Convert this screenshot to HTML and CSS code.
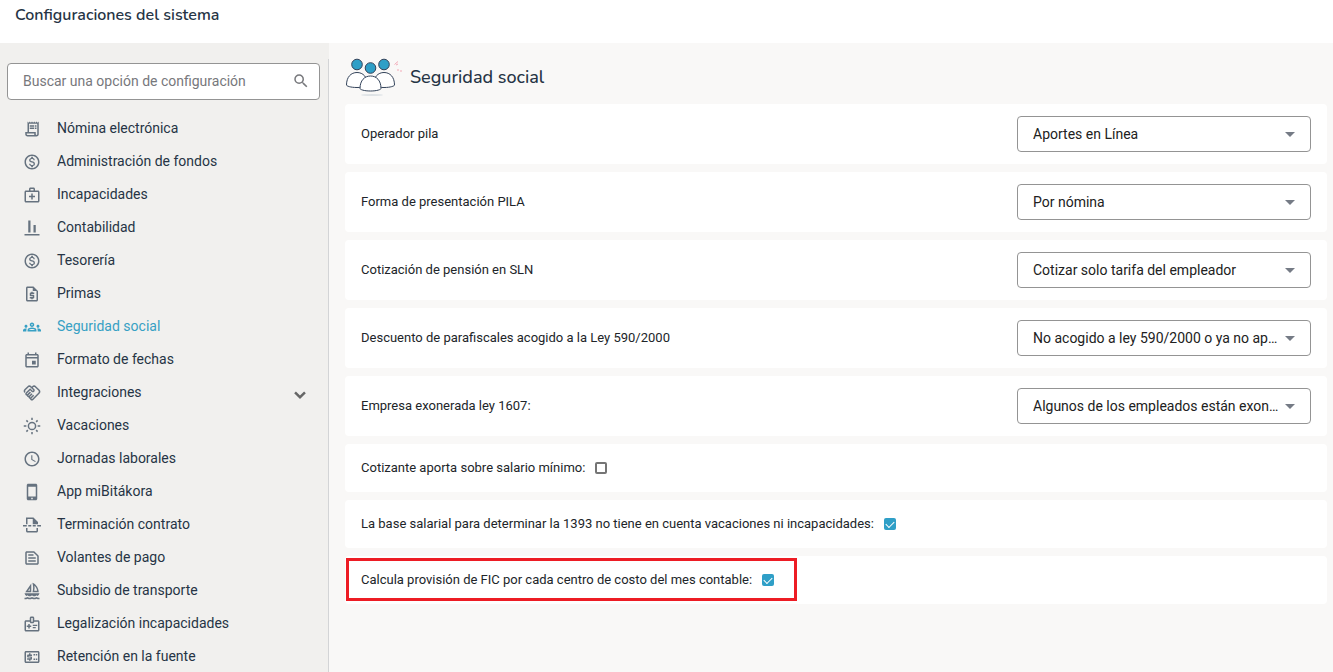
FILE: index.html
```html
<!DOCTYPE html>
<html lang="es">

<head>
    <meta charset="UTF-8" />
    <meta name="viewport" content="width=device-width, initial-scale=1.0" />
    <title>Configuraciones del sistema</title>
    <link rel="stylesheet" href="styles.css">
</head>

<body>
    <header class="topbar">
        <h1>Configuraciones del sistema</h1>
    </header>

    <div class="layout">
        <aside class="sidebar">
            <div class="sidebar-inner">
                <div class="search">
                    <input type="text" placeholder="Buscar una opción de configuración" aria-label="Buscar una opción de configuración">
                    <svg class="search-icon" viewBox="0 0 24 24"><path d="M15.5 14h-.79l-.28-.27A6.47 6.47 0 0 0 16 9.5 6.5 6.5 0 1 0 9.5 16c1.61 0 3.09-.59 4.23-1.57l.27.28v.79l5 4.99L20.49 19l-4.99-5zm-6 0C7.01 14 5 11.99 5 9.5S7.01 5 9.5 5 14 7.01 14 9.5 11.99 14 9.5 14z"/></svg>
                </div>

                <nav class="menu">
                    <a href="#">
                        <svg viewBox="0 0 24 24"><path d="M19.5 3.5L18 2l-1.5 1.5L15 2l-1.5 1.5L12 2l-1.5 1.5L9 2 7.5 3.5 6 2v14H3v3c0 1.66 1.34 3 3 3h12c1.66 0 3-1.34 3-3V2l-1.5 1.5zM15 20H6c-.55 0-1-.45-1-1v-1h10v2zm4-1c0 .55-.45 1-1 1s-1-.45-1-1v-3H8V5h11v14zM9 7h6v2H9zM16 7h2v2h-2zM9 10h6v2H9zM16 10h2v2h-2z"/></svg>
                        <span>Nómina electrónica</span>
                    </a>
                    <a href="#">
                        <svg viewBox="0 0 24 24"><path d="M12 2C6.48 2 2 6.48 2 12s4.48 10 10 10 10-4.48 10-10S17.52 2 12 2zm0 18c-4.41 0-8-3.59-8-8s3.59-8 8-8 8 3.59 8 8-3.59 8-8 8zm.31-8.86c-1.77-.45-2.34-.94-2.34-1.67 0-.84.79-1.43 2.1-1.43 1.38 0 1.9.66 1.94 1.64h1.71c-.05-1.34-.87-2.57-2.49-2.97V5H10.9v1.69c-1.51.32-2.72 1.3-2.72 2.81 0 1.79 1.49 2.69 3.66 3.21 1.95.46 2.34 1.15 2.34 1.87 0 .53-.39 1.39-2.1 1.39-1.6 0-2.23-.72-2.32-1.64H8.04c.1 1.7 1.36 2.66 2.86 2.97V19h2.34v-1.67c1.52-.29 2.72-1.16 2.73-2.77-.01-2.2-1.9-2.96-3.66-3.42z"/></svg>
                        <span>Administración de fondos</span>
                    </a>
                    <a href="#">
                        <svg viewBox="0 0 24 24"><path d="M20 6h-4V4c0-1.1-.9-2-2-2h-4c-1.1 0-2 .9-2 2v2H4c-1.1 0-2 .9-2 2v12c0 1.1.9 2 2 2h16c1.1 0 2-.9 2-2V8c0-1.1-.9-2-2-2zM10 4h4v2h-4V4zm10 16H4V8h16v12zM13 10h-2v3H8v2h3v3h2v-3h3v-2h-3z"/></svg>
                        <span>Incapacidades</span>
                    </a>
                    <a href="#">
                        <svg viewBox="0 0 24 24"><path d="M2 20h20v2H2zM7 2h3v16H7zM14 8h3v10h-3z"/></svg>
                        <span>Contabilidad</span>
                    </a>
                    <a href="#">
                        <svg viewBox="0 0 24 24"><path d="M12 2C6.48 2 2 6.48 2 12s4.48 10 10 10 10-4.48 10-10S17.52 2 12 2zm0 18c-4.41 0-8-3.59-8-8s3.59-8 8-8 8 3.59 8 8-3.59 8-8 8zm.31-8.86c-1.77-.45-2.34-.94-2.34-1.67 0-.84.79-1.43 2.1-1.43 1.38 0 1.9.66 1.94 1.64h1.71c-.05-1.34-.87-2.57-2.49-2.97V5H10.9v1.69c-1.51.32-2.72 1.3-2.72 2.81 0 1.79 1.49 2.69 3.66 3.21 1.95.46 2.34 1.15 2.34 1.87 0 .53-.39 1.39-2.1 1.39-1.6 0-2.23-.72-2.32-1.64H8.04c.1 1.7 1.36 2.66 2.86 2.97V19h2.34v-1.67c1.52-.29 2.72-1.16 2.73-2.77-.01-2.2-1.9-2.96-3.66-3.42z"/></svg>
                        <span>Tesorería</span>
                    </a>
                    <a href="#">
                        <svg viewBox="0 0 24 24"><path d="M14 2H6c-1.1 0-2 .9-2 2v16c0 1.1.89 2 2 2h12c1.1 0 2-.9 2-2V8l-6-6zM6 20V4h7v4h5v12H6zM11 19h2v-1h1c.55 0 1-.45 1-1v-3c0-.55-.45-1-1-1h-3v-1h4v-2h-2V9h-2v1h-1c-.55 0-1 .45-1 1v3c0 .55.45 1 1 1h3v1H9v2h2v1z"/></svg>
                        <span>Primas</span>
                    </a>
                    <a href="#" class="active">
                        <svg viewBox="0 0 24 24"><path d="M4 13c1.1 0 2-.9 2-2s-.9-2-2-2-2 .9-2 2 .9 2 2 2zm1.13 1.1c-.37-.06-.74-.1-1.13-.1-.99 0-1.93.21-2.78.58C.48 14.9 0 15.62 0 16.43V18h4.5v-1.61c0-.83.23-1.61.63-2.29zM20 13c1.1 0 2-.9 2-2s-.9-2-2-2-2 .9-2 2 .9 2 2 2zm4 3.43c0-.81-.48-1.53-1.22-1.85-.85-.37-1.79-.58-2.78-.58-.39 0-.76.04-1.13.1.4.68.63 1.46.63 2.29V18H24v-1.57zM16.24 13.65c-1.17-.52-2.61-.9-4.24-.9s-3.07.39-4.24.9C6.68 14.13 6 15.21 6 16.39V18h12v-1.61c0-1.18-.68-2.26-1.76-2.74zM8.07 16c.09-.23.13-.39.91-.69.97-.38 1.99-.56 3.02-.56s2.05.18 3.02.56c.77.3.81.46.91.69H8.07zM12 8c.55 0 1 .45 1 1s-.45 1-1 1-1-.45-1-1 .45-1 1-1m0-2c-1.66 0-3 1.34-3 3s1.34 3 3 3 3-1.34 3-3-1.34-3-3-3z"/></svg>
                        <span>Seguridad social</span>
                    </a>
                    <a href="#">
                        <svg viewBox="0 0 24 24"><path d="M19 4h-1V2h-2v2H8V2H6v2H5c-1.11 0-1.99.9-1.99 2L3 20c0 1.1.89 2 2 2h14c1.1 0 2-.9 2-2V6c0-1.1-.9-2-2-2zm0 16H5V10h14v10zm0-12H5V6h14v2zM12 13h5v5h-5z"/></svg>
                        <span>Formato de fechas</span>
                    </a>
                    <a href="#">
                        <svg viewBox="0 0 24 24"><path d="M12.22 19.85c-.18.18-.5.21-.71 0a.504.504 0 0 1 0-.71l3.39-3.39-1.41-1.41-3.39 3.39c-.19.2-.51.19-.71 0a.504.504 0 0 1 0-.71l3.39-3.39-1.41-1.41-3.39 3.39c-.18.18-.5.21-.71 0a.513.513 0 0 1 0-.71l3.39-3.39-1.42-1.41-3.39 3.39c-.18.18-.5.21-.71 0a.513.513 0 0 1 0-.71L9.52 8.4l1.87 1.86c.95.95 2.59.94 3.54 0 .98-.98.98-2.56 0-3.54l-1.86-1.86.28-.28c.78-.78 2.05-.78 2.83 0l4.24 4.24c.78.78.78 2.05 0 2.83l-8.2 8.2zm9.61-6.78a4.008 4.008 0 0 0 0-5.66l-4.24-4.24a4.008 4.008 0 0 0-5.66 0l-.28.28-.28-.28a4.008 4.008 0 0 0-5.66 0L2.17 6.71a3.992 3.992 0 0 0-.4 5.19l1.45-1.45a2 2 0 0 1 .37-2.33l3.54-3.54c.78-.78 2.05-.78 2.83 0l3.56 3.56c.18.18.21.5 0 .71-.21.21-.53.18-.71 0L9.52 5.57l-5.8 5.79c-.98.97-.98 2.56 0 3.54.39.39.89.63 1.42.7a2.458 2.458 0 0 0 2.12 2.12 2.458 2.458 0 0 0 2.12 2.12c.07.54.31 1.03.7 1.42.47.47 1.1.73 1.77.73.67 0 1.3-.26 1.77-.73l8.21-8.19z"/></svg>
                        <span>Integraciones</span>
                        <svg class="chevron" viewBox="0 0 24 24"><path d="M5 6l7 7 7-7 3 3-10 10L2 9z"/></svg>
                    </a>
                    <a href="#">
                        <svg class="stroked" viewBox="0 0 24 24"><circle cx="12" cy="12" r="4.8"/><path d="M12 1v3M12 20v3M1 12h3.5M19.5 12H23M4.5 4.5l2 2M17.5 17.5l2 2M19.5 4.5l-2 2M6.5 17.5l-2 2"/></svg>
                        <span>Vacaciones</span>
                    </a>
                    <a href="#">
                        <svg viewBox="0 0 24 24"><path d="M12 2C6.48 2 2 6.48 2 12s4.48 10 10 10 10-4.48 10-10S17.52 2 12 2zm0 18c-4.42 0-8-3.58-8-8s3.58-8 8-8 8 3.58 8 8-3.58 8-8 8zM12.5 7H11v6l5.25 3.15.75-1.23-4.5-2.67z"/></svg>
                        <span>Jornadas laborales</span>
                    </a>
                    <a href="#">
                        <svg viewBox="0 0 24 24"><path fill-rule="evenodd" d="M7 1h10c1.1 0 2 .9 2 2v18c0 1.1-.9 2-2 2H7c-1.1 0-2-.9-2-2V3c0-1.1.9-2 2-2zm0 4v13h10V5zm4 14.5v2h2v-2z"/></svg>
                        <span>App miBitákora</span>
                    </a>
                    <a href="#">
                        <svg viewBox="0 0 24 24"><path d="M4 2h10l6 6v3h-7V4H6v7H4zM0 12h5v2H0zM7 12h4v2H7zM13 12h4v2h-4zM19 12h5v2h-5zM4 16h2v4h12v-4h2v4c0 1.1-.9 2-2 2H6c-1.1 0-2-.9-2-2z"/></svg>
                        <span>Terminación contrato</span>
                    </a>
                    <a href="#">
                        <svg viewBox="0 0 24 24"><path d="M14.17 5L19 9.83V19H5V5h9.17m0-2H5c-1.1 0-2 .9-2 2v14c0 1.1.9 2 2 2h14c1.1 0 2-.9 2-2V9.83c0-.53-.21-1.04-.59-1.41l-4.83-4.83c-.37-.38-.88-.59-1.41-.59zM7 15h10v2H7v-2zm0-4h10v2H7v-2zm0-4h7v2H7V7z"/></svg>
                        <span>Volantes de pago</span>
                    </a>
                    <a href="#">
                        <svg viewBox="0 0 24 24"><path fill-rule="evenodd" d="M11 13.5V2L3 13.5zm-2-2H6.83L9 8.38zM21 13.5C21 6.5 14.5 1 12.5 1c0 0 1 3 1 6.5s-1 6-1 6zm-6-2c.6-2.3.6-4.5.3-6.5 1.9 1.9 3.1 4.2 3.5 6.5zM22 15H2c.31 1.53 1.16 2.84 2.33 3.73.65-.27 1.22-.72 1.67-1.23.73.84 1.8 1.5 3 1.5s2.27-.66 3-1.5c.73.84 1.8 1.5 3 1.5s2.26-.66 3-1.5c.45.51 1.02.96 1.67 1.23C20.84 17.84 21.69 16.53 22 15zM22 23v-2h-1c-1.04 0-2.08-.35-3-1-1.83 1.3-4.17 1.3-6 0-1.83 1.3-4.17 1.3-6 0-.91.65-1.96 1-3 1H2v2h1c1.03 0 2.05-.25 3-.75 1.89 1 4.11 1 6 0 1.89 1 4.11 1 6 0 .95.5 1.97.75 3 .75z"/></svg>
                        <span>Subsidio de transporte</span>
                    </a>
                    <a href="#">
                        <svg viewBox="0 0 24 24"><path d="M20 7h-5V4c0-1.1-.9-2-2-2h-2c-1.1 0-2 .9-2 2v3H4c-1.1 0-2 .9-2 2v11c0 1.1.9 2 2 2h16c1.1 0 2-.9 2-2V9c0-1.1-.9-2-2-2zm-9-3h2v5h-2V4zm9 16H4V9h5c0 1.1.9 2 2 2h2c1.1 0 2-.9 2-2h5v11zM11 16H9v2H7v-2H5v-2h2v-2h2v2h2v2zm2-1.5V13h6v1.5h-6zm0 3V16h4v1.5h-4z"/></svg>
                        <span>Legalización incapacidades</span>
                    </a>
                    <a href="#">
                        <svg viewBox="0 0 24 24"><path fill-rule="evenodd" d="M4 4h16c1.1 0 2 .9 2 2v12c0 1.1-.9 2-2 2H4c-1.1 0-2-.9-2-2V6c0-1.1.9-2 2-2zm0 2v12h16V6z"/><path d="M8 7h2v1.5h2v2H7.5v.8H11c.6 0 1 .4 1 1v2.200c0 .6-.4 1-1 1h-1V17H8v-1.500H5.500v-2h4.500v-.7H6.500c-.6 0-1-.4-1-1V9.500c0-.6.4-1 1-1H8zM14 8h2v2h-2zM14 14h2v2h-2zM17 8h2v2h-2zM17 14h2v2h-2z"/></svg>
                        <span>Retención en la fuente</span>
                    </a>
                </nav>
            </div>
        </aside>

        <main class="content">
            <div class="section-title">
                <svg class="people" viewBox="0 0 58 40">
                    <ellipse class="shadow" cx="27" cy="38" rx="11" ry="1"/>
                    <g class="bodies">
                        <path d="M1.5 28c0-8 4.500-12.500 10.500-12.500S22.500 20 22.500 28c0 1-4 2.500-10.500 2.500S1.500 29 1.500 28z"/>
                        <path d="M28.500 28c0-8 4.500-12.500 10.500-12.500S49.500 20 49.500 28c0 1-4 2.500-10.500 2.500S28.500 29 28.500 28z"/>
                        <path d="M15 31.500c0-8 4.500-12.500 10.500-12.500S36 23.500 36 31.500c0 1-4 2.500-10.500 2.500S15 32.500 15 31.500z"/>
                    </g>
                    <g class="heads">
                        <circle cx="12" cy="7.500" r="5.300"/>
                        <circle cx="39" cy="7.500" r="5.300"/>
                        <circle cx="25.500" cy="11" r="5.300"/>
                    </g>
                    <path class="sparks" d="M49.500 7.500l3.500-3M51 8l2-1M52 13h2M55 14h2"/>
                </svg>
                <h2>Seguridad social</h2>
            </div>

            <form class="settings">
                <div class="card">
                    <label for="operador">Operador pila</label>
                    <div class="select">
                        <select id="operador">
                            <option>Aportes en Línea</option>
                        </select>
                    </div>
                </div>
                <div class="card">
                    <label for="presentacion">Forma de presentación PILA</label>
                    <div class="select">
                        <select id="presentacion">
                            <option>Por nómina</option>
                        </select>
                    </div>
                </div>
                <div class="card">
                    <label for="pension">Cotización de pensión en SLN</label>
                    <div class="select">
                        <select id="pension">
                            <option>Cotizar solo tarifa del empleador</option>
                        </select>
                    </div>
                </div>
                <div class="card">
                    <label for="parafiscales">Descuento de parafiscales acogido a la Ley 590/2000</label>
                    <div class="select">
                        <select id="parafiscales">
                            <option>No acogido a ley 590/2000 o ya no aporta</option>
                        </select>
                    </div>
                </div>
                <div class="card">
                    <label for="exonerada">Empresa exonerada ley 1607:</label>
                    <div class="select">
                        <select id="exonerada">
                            <option>Algunos de los empleados están exonerados</option>
                        </select>
                    </div>
                </div>
                <div class="card card-check">
                    <label class="check"><span>Cotizante aporta sobre salario mínimo:</span> <input type="checkbox"></label>
                </div>
                <div class="card card-check">
                    <label class="check"><span>La base salarial para determinar la 1393 no tiene en cuenta vacaciones ni incapacidades:</span> <input type="checkbox" checked></label>
                </div>
                <div class="card card-check">
                    <label class="check highlight"><span>Calcula provisión de FIC por cada centro de costo del mes contable:</span> <input type="checkbox" checked></label>
                </div>
            </form>
        </main>
    </div>
</body>

</html>
```
FILE: styles.css
```css
* {
    box-sizing: border-box;
}

body {
    margin: 0;
    min-height: 100vh;
    display: flex;
    flex-direction: column;
    font-family: Roboto, Arial, sans-serif;
    font-size: 14px;
    color: #263445;
    background-color: #fff;
}

h1, h2 {
    margin: 0;
    font-family: Nunito, "Noto Sans", sans-serif;
}

.topbar {
    height: 43px;
    padding: 3px 15px;
}

.topbar h1 {
    font-size: 16px;
    line-height: 24px;
    font-weight: 600;
}

.layout {
    flex: 1;
    display: flex;
}

/* menu lateral */
.sidebar {
    width: 329px;
    flex-shrink: 0;
    display: flex;
    padding-top: 16px;
    background-color: #f1f0ee;
}

.sidebar-inner {
    flex: 1;
    padding: 4px 8px 0 7px;
    border-right: 1px solid #d3d4d6;
}

.search {
    display: flex;
    align-items: center;
    height: 37px;
    padding: 0 9px 0 15px;
    border: 1px solid #949494;
    border-radius: 4px;
    background-color: #fff;
}

.search input {
    flex: 1;
    min-width: 0;
    padding: 0 0 2px;
    border: none;
    outline: none;
    background: none;
    font: inherit;
    color: inherit;
}

.search input::placeholder {
    color: #77787c;
}

.search-icon {
    width: 18px;
    height: 18px;
    margin-bottom: 2px;
    fill: #77787c;
}

.menu {
    margin-top: 11px;
}

.menu a {
    display: flex;
    align-items: center;
    height: 33px;
    padding: 0 13px 0 16px;
    color: #263445;
    text-decoration: none;
}

.menu svg {
    width: 18px;
    height: 18px;
    margin-top: 2px;
    fill: #66727f;
}

.menu span {
    flex: 1;
    margin-left: 16px;
}

.menu .stroked {
    fill: none;
    stroke: #66727f;
    stroke-width: 2;
}

.menu .chevron {
    width: 14px;
    height: 14px;
    margin-top: 6px;
    fill: #666;
}

.menu .active {
    color: #37a0c4;
}

.menu .active svg {
    fill: #37a0c4;
}

/* contenido */
.content {
    flex: 1;
    min-width: 0;
    padding: 14px 6px 16px 16px;
    background-color: #f9f8f7;
}

.section-title {
    display: flex;
    align-items: center;
    gap: 7px;
    height: 40px;
    margin-bottom: 7px;
}

.section-title h2 {
    font-size: 18px;
    font-weight: 500;
}

.people {
    width: 58px;
    height: 40px;
}

.people .bodies {
    fill: #fff;
    stroke: #33435a;
    stroke-width: 1;
}

.people .heads {
    fill: #2f9fc7;
    stroke: #33435a;
    stroke-width: 1;
}

.people .shadow {
    fill: #dfe3e6;
}

.people .sparks {
    fill: none;
    stroke: #f3a9b7;
    stroke-width: 1;
}

.settings {
    display: flex;
    flex-direction: column;
    gap: 8px;
    font-size: 13px;
    color: #212529;
}

.card {
    display: flex;
    align-items: center;
    justify-content: space-between;
    height: 60px;
    padding: 0 16px;
    border-radius: 4px;
    background-color: #fff;
}

.card > label,
.check span {
    padding-bottom: 2px;
}

.card-check {
    height: 48px;
}

.card-check > label {
    padding-bottom: 0;
}

.select {
    position: relative;
    width: 294px;
}

.select::after {
    content: "";
    position: absolute;
    top: 16px;
    right: 16px;
    border: 5px solid transparent;
    border-top-color: #757b85;
    border-bottom: none;
    pointer-events: none;
}

.select select {
    appearance: none;
    width: 100%;
    height: 36px;
    padding: 0 27px 0 15px;
    border: 1px solid #949494;
    border-radius: 4px;
    background-color: #fff;
    font-family: inherit;
    font-size: 14px;
    color: #212121;
    overflow: hidden;
    white-space: nowrap;
    text-overflow: ellipsis;
}

.check {
    position: relative;
    display: flex;
    align-items: center;
    gap: 10px;
}

.check input {
    appearance: none;
    display: grid;
    place-items: center;
    width: 12px;
    height: 12px;
    margin: 0;
    border: 2px solid #757575;
    border-radius: 2px;
}

.check input:checked {
    border: none;
    background-color: #2f9fc7;
}

.check input:checked::before {
    content: "";
    width: 7px;
    height: 4px;
    margin-bottom: 2px;
    border-left: 1px solid #fff;
    border-bottom: 1px solid #fff;
    transform: rotate(-45deg);
}

/* marco rojo sobre la tarjeta */
.highlight::after {
    content: "";
    position: absolute;
    inset: -14px -23px -12px -15px;
    border: 3px solid #ed1c24;
    pointer-events: none;
}
```
